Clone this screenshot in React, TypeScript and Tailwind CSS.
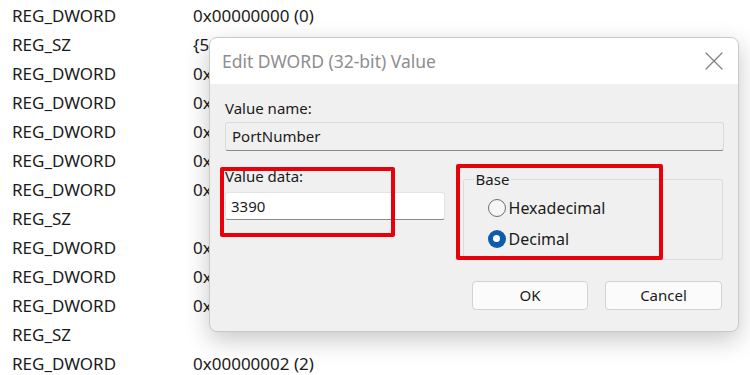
import { X } from 'lucide-react';

const ROWS: [string, string][] = [
  ['REG_DWORD', '0x00000000 (0)'],
  ['REG_SZ', '{5C'],
  ['REG_DWORD', '0x'],
  ['REG_DWORD', '0x'],
  ['REG_DWORD', '0x'],
  ['REG_DWORD', '0x'],
  ['REG_DWORD', '0x'],
  ['REG_SZ', ''],
  ['REG_DWORD', '0x'],
  ['REG_DWORD', '0x'],
  ['REG_DWORD', '0x'],
  ['REG_SZ', ''],
  ['REG_DWORD', '0x00000002 (2)'],
];

const font = { fontFamily: '"Noto Sans", "Open Sans", sans-serif' };

function Radio({ checked, label }: { checked?: boolean; label: string }) {
  return (
    <div className="flex items-center h-[31px]">
      {checked ? (
        <span className="w-[18px] h-[18px] rounded-full bg-[#0b5cad] flex items-center justify-center">
          <span className="w-[7px] h-[7px] rounded-full bg-white" />
        </span>
      ) : (
        <span className="w-[18px] h-[18px] rounded-full border border-[#6f6f6f] bg-[#f6f6f6]" />
      )}
      <span className="ml-[3px] text-[16px] text-[#1b1b1b]">{label}</span>
    </div>
  );
}

export default function App() {
  return (
    <div className="relative w-[750px] h-[375px] bg-white overflow-hidden" style={font}>
      {/* Registry list behind the dialog */}
      <div className="pt-px">
        {ROWS.map(([type, data], i) => (
          <div key={i} className="grid grid-cols-[181px_1fr] h-[29px] items-center pl-[12px] text-[17px] text-[#1b1b1b]">
            <span>{type}</span>
            <span>{data}</span>
          </div>
        ))}
      </div>

      {/* Dialog */}
      <div className="absolute left-[209px] top-[37px] w-[530px] h-[295px] rounded-[8px] border border-[#c9c9c9] bg-[#f0f0f0] shadow-[0_8px_24px_rgba(0,0,0,0.22)] overflow-hidden flex flex-col">
        <div className="h-[46px] bg-white flex items-center justify-between pl-[12px] pr-[8px]">
          <span className="text-[17.5px] text-[#8e8e8e]">Edit DWORD (32-bit) Value</span>
          <X className="w-[32px] h-[32px] text-[#808080]" strokeWidth={0.9} />
        </div>

        <div className="flex-1 px-[15px] pt-[13px]">
          <div className="text-[15px] text-[#1b1b1b] leading-[22px]">Value name:</div>
          <div className="mt-[3px] h-[29px] w-[499px] border border-[#dadada] border-b-[#8a8a8a] bg-[#f0f0f0] rounded-[3px] flex items-center px-[6px] text-[15px] text-[#1b1b1b]">
            PortNumber
          </div>

          <div className="mt-[15px] flex items-start">
            <div className="w-[220px]">
              <div className="text-[15px] text-[#1b1b1b] leading-[22px] -mt-px">Value data:</div>
              <div className="mt-[5px] h-[28px] bg-white border border-[#e3e3e3] border-b-[#8a8a8a] rounded-[3px] flex items-center px-[5px] text-[15px] text-[#1b1b1b]">
                3390
              </div>
            </div>
            <div className="ml-[18px] w-[261px] mt-[13px] h-[81px] border border-[#dcdcdc] rounded-[2px] relative">
              <span className="absolute -top-[11px] left-[10px] px-[2px] bg-[#f0f0f0] text-[15px] leading-[20px] text-[#1b1b1b]">Base</span>
              <div className="pl-[24px] pt-[12px] flex flex-col">
                <Radio label="Hexadecimal" />
                <Radio checked label="Decimal" />
              </div>
            </div>
          </div>

          <div className="mt-[21px] flex justify-end gap-[17px] pr-[1px]">
            <button className="w-[116px] h-[29px] bg-[#fbfbfb] border border-[#d2d2d2] rounded-[4px] text-[15px] text-[#1b1b1b]">OK</button>
            <button className="w-[117px] h-[29px] bg-[#fbfbfb] border border-[#d2d2d2] rounded-[4px] text-[15px] text-[#1b1b1b]">Cancel</button>
          </div>
        </div>
      </div>

      {/* Red annotation boxes */}
      <div className="absolute left-[220px] top-[167px] w-[175px] h-[70px] border-[4px] border-[#e8000b] rounded-[2px]" />
      <div className="absolute left-[456px] top-[164px] w-[207px] h-[96px] border-[4px] border-[#e8000b] rounded-[2px]" />
    </div>
  );
}
